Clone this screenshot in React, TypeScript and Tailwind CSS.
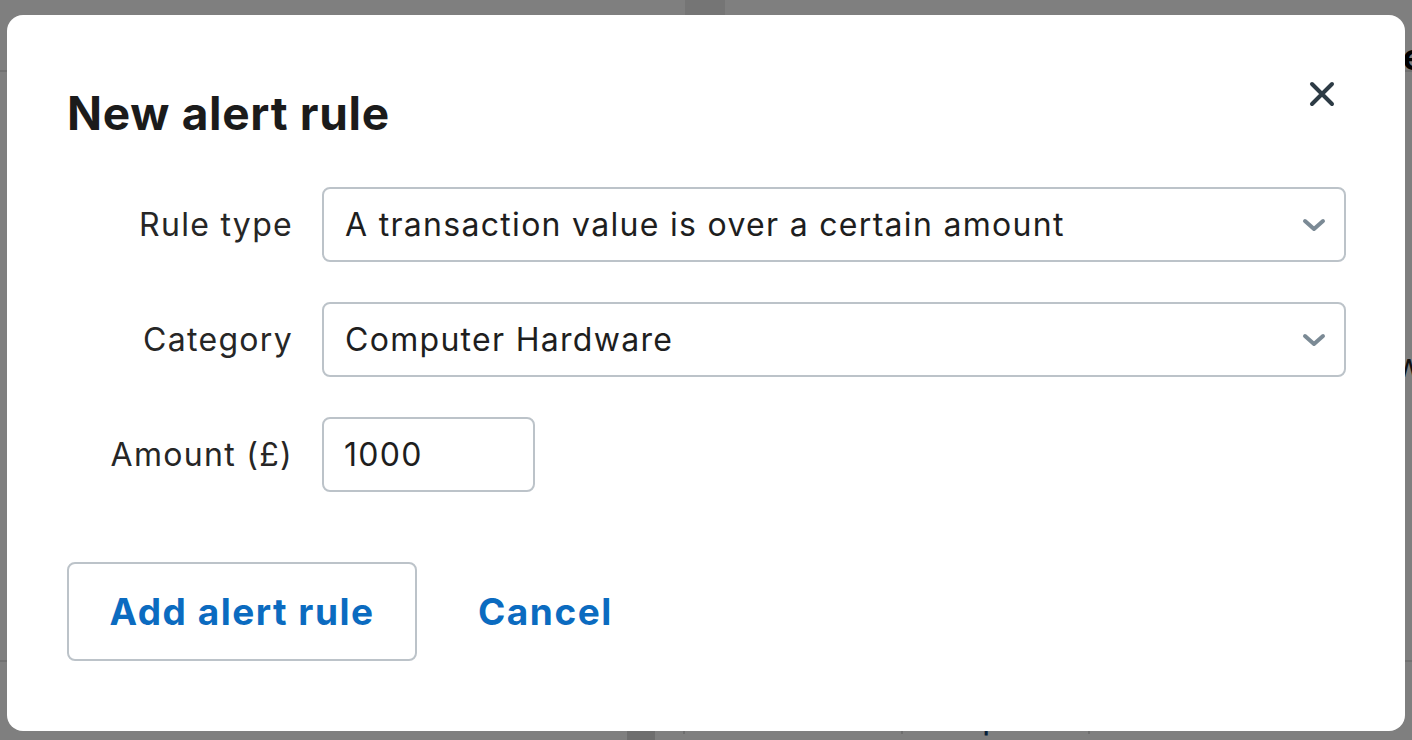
import { memo } from "react";

const font = { fontFamily: "Inter, 'Noto Sans', sans-serif" };

const Chevron = () => (
  <svg width="24" height="14" viewBox="0 0 24 14" className="shrink-0">
    <path
      d="M3 3l9 8 9-8"
      fill="none"
      stroke="#7b8a95"
      strokeWidth="4"
      strokeLinecap="round"
      strokeLinejoin="round"
    />
  </svg>
);

const CloseIcon = () => (
  <svg width="26" height="26" viewBox="0 0 26 26">
    <path
      d="M3 3l20 20M23 3L3 23"
      stroke="#2d3b45"
      strokeWidth="4"
      strokeLinecap="round"
    />
  </svg>
);

const SelectBox = ({ value }: { value: string }) => (
  <div className="flex h-[75px] items-center justify-between rounded-[8px] border-2 border-[#bcc3c9] pl-[21px] pr-[18px] text-[32px] tracking-[1.3px] text-[#1e1e1e]">
    <span>{value}</span>
    <Chevron />
  </div>
);

const Label = ({ children }: { children: string }) => (
  <div className="-mr-[2px] flex h-[75px] items-center justify-end text-[32px] tracking-[1.3px] text-[#262626]">
    {children}
  </div>
);

const Background = () => (
  <div className="flex h-[740px] flex-col bg-white">
    <div className="flex h-[72px] border-b-2 border-[#e3e3e3]">
      <div className="w-[685px]" />
      <div className="w-[40px] bg-[#eaeaea]" />
      <div className="flex-1 pt-[30px] text-right text-[36px] font-bold text-black">
        <span className="relative left-[12px]">Rule</span>
      </div>
    </div>
    <div className="flex flex-1 items-center justify-end">
      <span className="relative left-[10px] text-[32px] text-[#222]">w</span>
    </div>
    <div className="border-t-2 border-[#e3e3e3] pt-[38px]">
      <div className="flex items-start text-[34px] leading-none">
        <div className="w-[515px]" />
        <span className="font-bold text-black">Select</span>
        <div className="ml-[8px] h-[40px] w-[28px] bg-[#ddd]" />
        <div className="ml-[28px] flex border-l-2 border-[#ddd] pl-[115px]">
          <span className="text-[#0b4f8a]">Edit</span>
        </div>
        <div className="ml-[40px] flex border-l-2 border-[#ddd] pl-[40px]">
          <span className="text-[#0b3f72]">Export</span>
        </div>
        <div className="ml-[40px] flex border-l-2 border-[#ddd] pl-[40px]">
          <span className="text-[#a31515]">Delete</span>
        </div>
      </div>
    </div>
  </div>
);

const App = () => {
  return (
    <div className="relative h-[740px] w-[1412px] overflow-hidden" style={font}>
      <Background />
      <div className="absolute inset-0 bg-black/50 pl-[7px] pt-[15px]">
        <div className="flex h-[716px] w-[1398px] flex-col rounded-[16px] bg-white pl-[60px] pr-[59px]">
          <div className="flex items-start justify-between pt-[75px]">
            <h1 className="text-[46px] font-bold leading-none tracking-[0.7px] text-[#1b1b1b]">
              New alert rule
            </h1>
            <button className="mr-[11px] mt-[-9px]">
              <CloseIcon />
            </button>
          </div>

          <div className="mt-[51px] grid grid-cols-[224px_1fr] gap-x-[31px] gap-y-[40px]">
            <Label>Rule type</Label>
            <SelectBox value="A transaction value is over a certain amount" />
            <Label>Category</Label>
            <SelectBox value="Computer Hardware" />
            <Label>Amount (£)</Label>
            <div>
              <div className="flex h-[75px] w-[213px] items-center rounded-[8px] border-2 border-[#bcc3c9] pl-[20px] text-[32px] tracking-[1.3px] text-[#1e1e1e]">
                1000
              </div>
            </div>
          </div>

          <div className="mt-[70px] flex items-center gap-[61px]">
            <button className="h-[99px] w-[350px] rounded-[8px] border-2 border-[#bcc3c9] text-[37px] font-bold tracking-[1.5px] text-[#0b6bc0]">
              Add alert rule
            </button>
            <button className="text-[37px] font-bold tracking-[1.5px] text-[#0b6bc0]">Cancel</button>
          </div>
        </div>
      </div>
    </div>
  );
};

export default memo(App);
